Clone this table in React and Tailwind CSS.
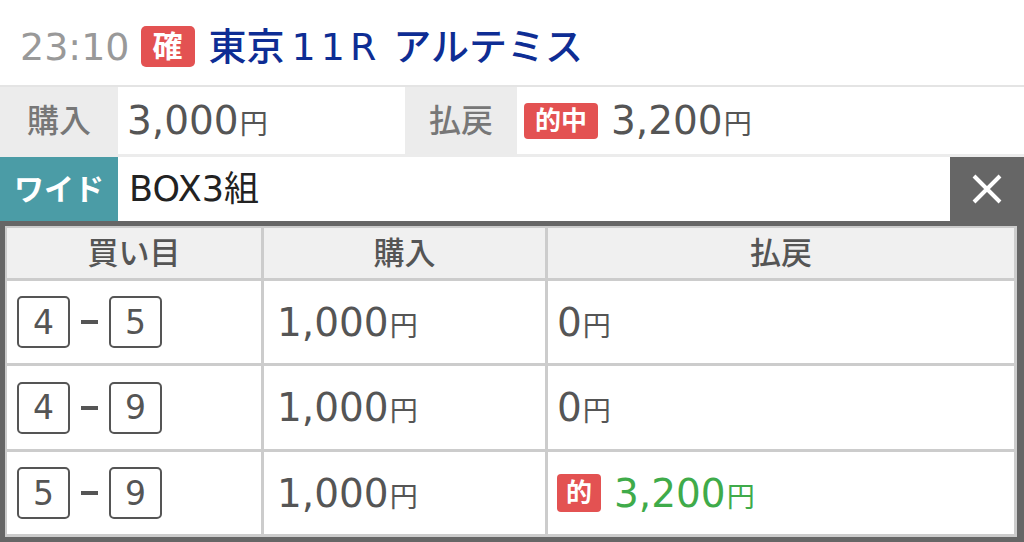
import React from "react";

const font = "font-['DejaVu_Sans','Noto_Sans_CJK_JP',sans-serif]";

function Yen({ children, cls = "" }) {
  return (
    <span className={`inline-flex items-baseline ${cls}`}>
      <span>{children}</span>
      <span className="text-[0.72em] ml-[1px]">円</span>
    </span>
  );
}

function NumBox({ n }) {
  return (
    <span className="w-[53px] h-[52px] border-2 border-[#555] rounded-[5px] flex items-center justify-center text-[33px] text-[#555] leading-none">
      {n}
    </span>
  );
}

function BetRow({ a, b, pay, hit }) {
  return (
    <>
      <div className="bg-white flex items-center pl-[10px] gap-[11px]">
        <NumBox n={a} />
        <span className="w-[17px] h-[4px] bg-[#555]" />
        <NumBox n={b} />
      </div>
      <div className="bg-white flex items-center pl-[13px]">
        <Yen cls="text-[39px] text-[#555] leading-none">1,000</Yen>
      </div>
      <div className="bg-white flex items-center pl-[9px]">
        {hit ? (
          <>
            <span className="w-[44px] h-[38px] bg-[#e35252] rounded-[4px] text-white text-[26px] font-bold flex items-center justify-center leading-none mr-[13px]">
              的
            </span>
            <Yen cls="text-[39px] text-[#3fab4a] leading-none">{pay}</Yen>
          </>
        ) : (
          <Yen cls="text-[39px] text-[#555] leading-none">{pay}</Yen>
        )}
      </div>
    </>
  );
}

export default function App() {
  return (
    <div className={`w-[1024px] h-[542px] overflow-hidden bg-white ${font}`}>
      {/* header */}
      <div className="h-[85px] flex items-center pl-[20px] pt-[8px]">
        <span className="text-[38px] text-[#999] leading-none">23:10</span>
        <span className="ml-[11px] w-[54px] h-[41px] bg-[#e35252] rounded-[5px] text-white text-[30px] font-bold flex items-center justify-center leading-none">
          確
        </span>
        <span className="ml-[14px] text-[38px] text-[#0e2d94] font-medium leading-none flex items-baseline">
          <span>東京</span>
          <span className="ml-[7px] tracking-[5px]">11R</span>
          <span className="ml-[12px]">アルテミス</span>
        </span>
      </div>

      {/* purchase row */}
      <div className="bg-[#ececec] border-t-2 border-[#e4e4e4] pb-[3px]">
        <div className="h-[67px] flex">
          <div className="w-[118px] flex items-center justify-center text-[32px] text-[#777] font-medium">
            購入
          </div>
          <div className="w-[287px] bg-white flex items-center pl-[9px]">
            <Yen cls="text-[39px] text-[#555] leading-none">3,000</Yen>
          </div>
          <div className="w-[112px] flex items-center justify-center text-[32px] text-[#777] font-medium">
            払戻
          </div>
          <div className="flex-1 bg-white flex items-center pl-[7px]">
            <span className="w-[74px] h-[36px] bg-[#e35252] rounded-[4px] text-white text-[26px] font-bold flex items-center justify-center leading-none mr-[13px]">
              的中
            </span>
            <Yen cls="text-[39px] text-[#555] leading-none">3,200</Yen>
          </div>
        </div>
      </div>

      {/* type row */}
      <div className="h-[64px] flex">
        <div className="w-[118px] bg-[#4b9ca6] flex items-center justify-center text-white text-[30px] font-bold">
          ワイド
        </div>
        <div className="w-[832px] bg-white flex items-center pl-[11px] text-[35px] text-[#222]">
          BOX3組
        </div>
        <div className="flex-1 bg-[#666] flex items-center justify-center">
          <svg width="32" height="32" viewBox="0 0 32 32" fill="none" stroke="white" strokeWidth="4" strokeLinecap="butt">
            <path d="M3 3 L29 29 M29 3 L3 29" />
          </svg>
        </div>
      </div>

      {/* table */}
      <div className="bg-[#666] pt-[5px] pl-[5px] pr-[7px] pb-[5px]">
        <div className="bg-[#cccccc] pt-[2px] pl-[2px] pr-[3px] pb-[3px] grid grid-cols-[254px_281px_1fr] grid-rows-[50px_82px_83px_82px] gap-[3px]">
          <div className="bg-[#f0f0f0] flex items-center justify-center text-[31px] text-[#555] font-medium">買い目</div>
          <div className="bg-[#f0f0f0] flex items-center justify-center text-[31px] text-[#555] font-medium">購入</div>
          <div className="bg-[#f0f0f0] flex items-center justify-center text-[31px] text-[#555] font-medium">払戻</div>
          <BetRow a="4" b="5" pay="0" />
          <BetRow a="4" b="9" pay="0" />
          <BetRow a="5" b="9" pay="3,200" hit />
        </div>
      </div>
    </div>
  );
}
